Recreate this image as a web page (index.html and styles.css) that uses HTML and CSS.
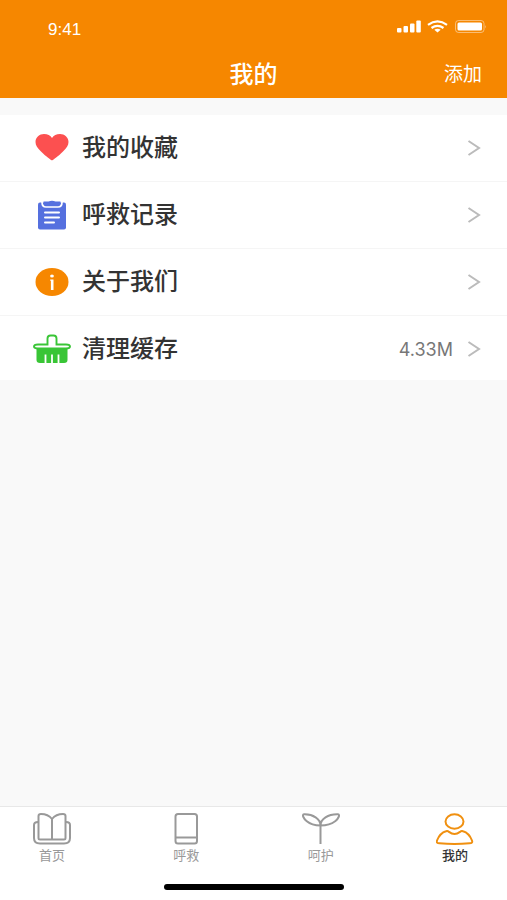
FILE: index.html
```html
<!DOCTYPE html>
<html lang="zh-CN">
<head>
<meta charset="utf-8">
<meta name="viewport" content="width=device-width, initial-scale=1">
<title>我的</title>
<link rel="stylesheet" href="styles.css">
</head>
<body>
<div class="app">
  <header class="header">
    <div class="status">
      <span class="time">9:41</span>
      <svg class="signals" width="90" height="14" viewBox="0 0 90 14" aria-hidden="true">
        <g fill="#fff">
          <rect x="0" y="8" width="4.500" height="4.500" rx="1"/>
          <rect x="6.500" y="6" width="4.500" height="6.500" rx="1"/>
          <rect x="13" y="3.500" width="4.500" height="9" rx="1"/>
          <rect x="19.300" y="0.500" width="4.500" height="12" rx="1"/>
          <path d="M40.500 12.500l-3.200-2.800q3.200-2 6.400 0z"/>
          <rect x="60.500" y="2.500" width="24.500" height="8" rx="1.500"/>
        </g>
        <g fill="none" stroke="#fff" stroke-width="2.200">
          <path d="M31 4.800q9.500-6.800 19 0M34.500 8q6-4.200 12 0"/>
          <rect x="58.500" y="0.500" width="28.500" height="12" rx="3" stroke-width="1" opacity=".45"/>
        </g>
        <path d="M88.200 5v3.500q1.600-1.700 0-3.500z" fill="#fff" opacity=".5"/>
      </svg>
    </div>
    <div class="titlebar">
      <h1 class="title">我的</h1>
      <button class="add" type="button">添加</button>
    </div>
  </header>

  <main class="content">
    <ul class="menu">
      <li><a class="row" href="#favorites">
        <svg class="icon" width="38" height="30" viewBox="0 0 38 30" aria-hidden="true"><path d="M19 27.500C17.500 26.500 13 23.500 8 18.500 4.500 15 2.500 12.500 2.500 9 2.500 4.500 6.500 1 11 1 14.500 1 17.500 2.500 19 5 20.500 2.500 23.500 1 27 1 31.500 1 35.500 4.500 35.500 9 35.500 12.500 33.500 15 30 18.500 25 23.500 20.500 26.500 19 27.500z" fill="#fc5050"/></svg>
        <span class="label">我的收藏</span>
        <svg class="chevron" width="14" height="18" viewBox="0 0 14 18" aria-hidden="true"><path d="M1.500 2L12 9 1.500 16"/></svg>
      </a></li>
      <li><a class="row" href="#records">
        <svg class="icon" width="38" height="30" viewBox="0 0 38 30" aria-hidden="true">
          <rect x="5" y="2.500" width="28" height="27" rx="2" fill="#5570df"/>
          <path d="M9 2q0 5 4 5h12q4 0 4-5" fill="none" stroke="#fff" stroke-width="1.700"/>
          <path d="M10.500 1.500h5q3.500-1.600 7 0h5q0 4-3 4h-11q-3 0-3-4z" fill="#5570df"/>
          <path d="M12 12.500h14M12 17.500h14M12 22.500h9" stroke="#fff" stroke-width="2" stroke-linecap="round"/>
        </svg>
        <span class="label">呼救记录</span>
        <svg class="chevron" width="14" height="18" viewBox="0 0 14 18" aria-hidden="true"><path d="M1.500 2L12 9 1.500 16"/></svg>
      </a></li>
      <li><a class="row" href="#about">
        <svg class="icon" width="38" height="30" viewBox="0 0 38 30" aria-hidden="true">
          <ellipse cx="19" cy="15" rx="16.500" ry="14" fill="#f68700"/>
          <ellipse cx="19" cy="9" rx="1.900" ry="1.600" fill="#fff"/>
          <path d="M17.200 12.500h3.300V23h-2.600V13.800h-.7z" fill="#fff"/>
        </svg>
        <span class="label">关于我们</span>
        <svg class="chevron" width="14" height="18" viewBox="0 0 14 18" aria-hidden="true"><path d="M1.500 2L12 9 1.500 16"/></svg>
      </a></li>
      <li><a class="row" href="#cache">
        <svg class="icon" width="38" height="30" viewBox="0 0 38 30" aria-hidden="true">
          <path d="M3.500 14h31v12q0 3-3.500 3H7q-3.500 0-3.500-3z" fill="#39c536"/>
          <path d="M14.500 10.500V4.500q0-3 3-3h3q3 0 3 3v6H33q4 0 4 2t-4 2H5q-4 0-4-2t4-2z" fill="#fff" stroke="#39c536" stroke-width="1.900"/>
          <path d="M12.500 20.500V30M19 20.500V30M25.500 20.500V30" stroke="#fff" stroke-width="1.800"/>
        </svg>
        <span class="label">清理缓存</span>
        <span class="value">4.33M</span>
        <svg class="chevron" width="14" height="18" viewBox="0 0 14 18" aria-hidden="true"><path d="M1.500 2L12 9 1.500 16"/></svg>
      </a></li>
    </ul>
  </main>

  <footer class="footer">
    <nav class="tabs">
      <a class="tab" href="#home">
        <svg width="38" height="32" viewBox="0 0 38 32" aria-hidden="true">
          <path d="M19 6Q15 1 8 1 5.500 1 5.500 3V25q0 1.500 1.500 1.500h24q1.500 0 1.500-1.500V3Q32.500 1 30 1 23 1 19 6zM19 6v20.500"/>
          <path d="M5 9q-4 0-4 3v13q0 5.500 6 5.500h24q6 0 6-5.500V12q0-3-4-3"/>
        </svg>
        <span>首页</span>
      </a>
      <a class="tab" href="#call">
        <svg width="38" height="32" viewBox="0 0 38 32" aria-hidden="true"><rect x="8.500" y="1" width="21.500" height="29.500" rx="2.500"/><path d="M8.500 24.500h21.500"/></svg>
        <span>呼救</span>
      </a>
      <a class="tab" href="#care">
        <svg width="38" height="32" viewBox="0 0 38 32" aria-hidden="true"><path d="M18.500 31V12.500C18.500 6 11 1 2 1.300-.5 1.500 2 6 4.500 8 8.500 11.500 13 12.500 18.500 12.500 24 12.500 29 11.500 33.500 8 36 6 38.500 1.500 36 1.300 26 1 18.500 6 18.500 12.500"/></svg>
        <span>呵护</span>
      </a>
      <a class="tab tab-active" href="#me" aria-current="page">
        <svg width="38" height="32" viewBox="0 0 38 32" aria-hidden="true"><ellipse cx="18.500" cy="8.500" rx="9" ry="7.200"/><path d="M10 18.300q1.600-.6 3 .6 5.500 4.300 11 0 1.400-1.200 3-.6 6 1.700 9 9.200 1 2.700-2.500 2.800-15 1.200-30 0Q0 30.200 1 27.500 4 20 10 18.300z"/></svg>
        <span>我的</span>
      </a>
    </nav>
    <div class="home-bar"></div>
  </footer>
</div>
</body>
</html>
```
FILE: styles.css
```css
* {
  box-sizing: border-box;
}

body {
  margin: 0;
  font-family: "Liberation Sans", "Noto Sans CJK SC", sans-serif;
  color: #333;
  background: #f9f9f9;
}

a {
  color: inherit;
  text-decoration: none;
}

.app {
  display: flex;
  flex-direction: column;
  min-height: 100vh;
}

.header {
  color: #fff;
  background: #f68700;
}

.status {
  display: flex;
  align-items: flex-start;
  justify-content: space-between;
  height: 52px;
  padding: 20px 20px 0 48px;
}

.time {
  font-family: "Liberation Sans", sans-serif;
  font-size: 17px;
  font-weight: 500;
  line-height: 20px;
}

.titlebar {
  display: grid;
  grid-template-columns: 1fr auto 1fr;
  align-items: center;
  height: 46px;
  padding: 0 25px;
}

.title {
  grid-column: 2;
  margin: 0;
  font-size: 24px;
  font-weight: 500;
  line-height: 36px;
}

.add {
  justify-self: end;
  padding: 0;
  border: 0;
  font: inherit;
  font-size: 19px;
  line-height: 36px;
  color: inherit;
  background: none;
}

.content {
  flex: 1;
  padding-top: 17px;
}

.menu {
  margin: 0;
  padding: 0;
  list-style: none;
  background: #fff;
}

.row {
  display: flex;
  align-items: center;
  padding: 15px 26px 15px 33px;
  border-bottom: 1px solid #f5f5f5;
}

.menu li:last-child .row {
  padding-bottom: 13px;
  border-bottom: 0;
}

.icon {
  margin-right: 11px;
}

.label {
  flex: 1;
  font-size: 24px;
  font-weight: 500;
  line-height: 36px;
}

.value {
  margin-right: 14px;
  font-family: Inter, "Liberation Sans", sans-serif;
  font-size: 18px;
  color: #777;
}

.chevron {
  fill: none;
  stroke: #bbb;
  stroke-width: 2;
}

.footer {
  padding-bottom: 10px;
  border-top: 1px solid #e8e8e8;
  background: #fff;
}

.tabs {
  display: flex;
  justify-content: space-between;
  padding: 6px 33px 18px;
}

.tab {
  display: flex;
  flex-direction: column;
  gap: 1px;
  align-items: center;
  font-size: 13px;
  line-height: 20px;
  color: #999;
}

.tab svg {
  fill: none;
  stroke: #999;
  stroke-width: 2;
  stroke-linejoin: round;
}

.tab-active {
  font-weight: 500;
  color: #333;
}

.tab-active svg {
  stroke: #f09010;
}

.home-bar {
  width: 180px;
  height: 6px;
  margin: 0 auto;
  border-radius: 3px;
  background: #000;
}
```
